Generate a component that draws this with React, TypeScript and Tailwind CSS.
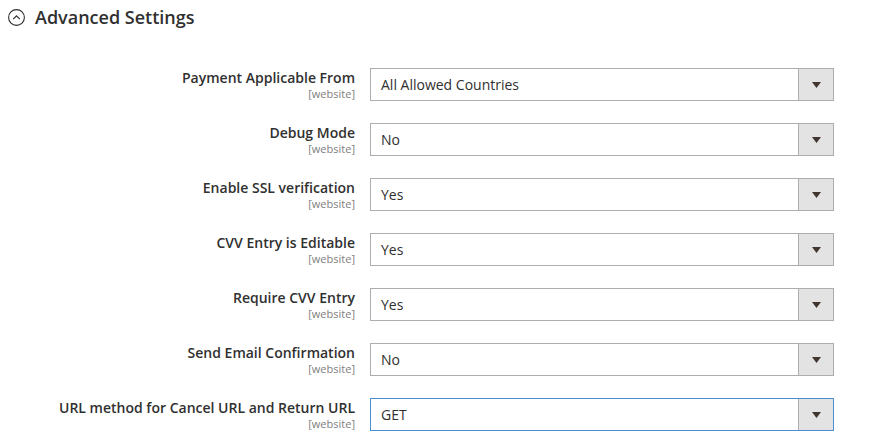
import React from 'react';

const rows = [
  { label: 'Payment Applicable From', value: 'All Allowed Countries' },
  { label: 'Debug Mode', value: 'No' },
  { label: 'Enable SSL verification', value: 'Yes' },
  { label: 'CVV Entry is Editable', value: 'Yes' },
  { label: 'Require CVV Entry', value: 'Yes' },
  { label: 'Send Email Confirmation', value: 'No' },
  { label: 'URL method for Cancel URL and Return URL', value: 'GET', focused: true },
];

const Select: React.FC<{ value: string; focused?: boolean }> = ({ value, focused }) => (
  <div
    className={`flex h-[33px] w-[464px] border bg-white ${
      focused ? 'border-[#4a8fd4]' : 'border-[#adadad]'
    }`}
  >
    <div className="flex flex-1 items-center pl-[10px] text-[14px] text-[#303030]">{value}</div>
    <div className="flex w-[35px] items-center justify-center border-l border-[#adadad] bg-[#e3e3e3]">
      <svg width="9" height="6" viewBox="0 0 9 6">
        <path d="M0 0h9L4.5 6z" fill="#41362f" />
      </svg>
    </div>
  </div>
);

export default function App() {
  return (
    <div className="h-[447px] w-[871px] bg-white text-[#303030]" style={{ fontFamily: '"Open Sans", sans-serif' }}>
      <div className="flex items-center gap-[10px] pl-[8px] pt-[5px]">
        <svg width="17" height="17" viewBox="0 0 17 17">
          <circle cx="8.5" cy="8.5" r="7.9" fill="none" stroke="#303030" strokeWidth="1.1" />
          <path d="M5.2 10.2l3.3-3.3 3.3 3.3" fill="none" stroke="#303030" strokeWidth="1.2" />
        </svg>
        <h2 className="text-[18px] font-semibold leading-[24px] text-[#303030]">Advanced Settings</h2>
      </div>

      <div className="mt-[39px] flex flex-col gap-[22px]">
        {rows.map((r) => (
          <div key={r.label} className="flex h-[33px]">
            <div className="w-[355px] pt-[1px] text-right">
              <div className="text-[14px] font-semibold leading-[18px] text-[#303030]">{r.label}</div>
              <div className="text-[11px] leading-[14px] text-[#808080]">[website]</div>
            </div>
            <div className="ml-[15px]">
              <Select value={r.value} focused={r.focused} />
            </div>
          </div>
        ))}
      </div>
    </div>
  );
}
